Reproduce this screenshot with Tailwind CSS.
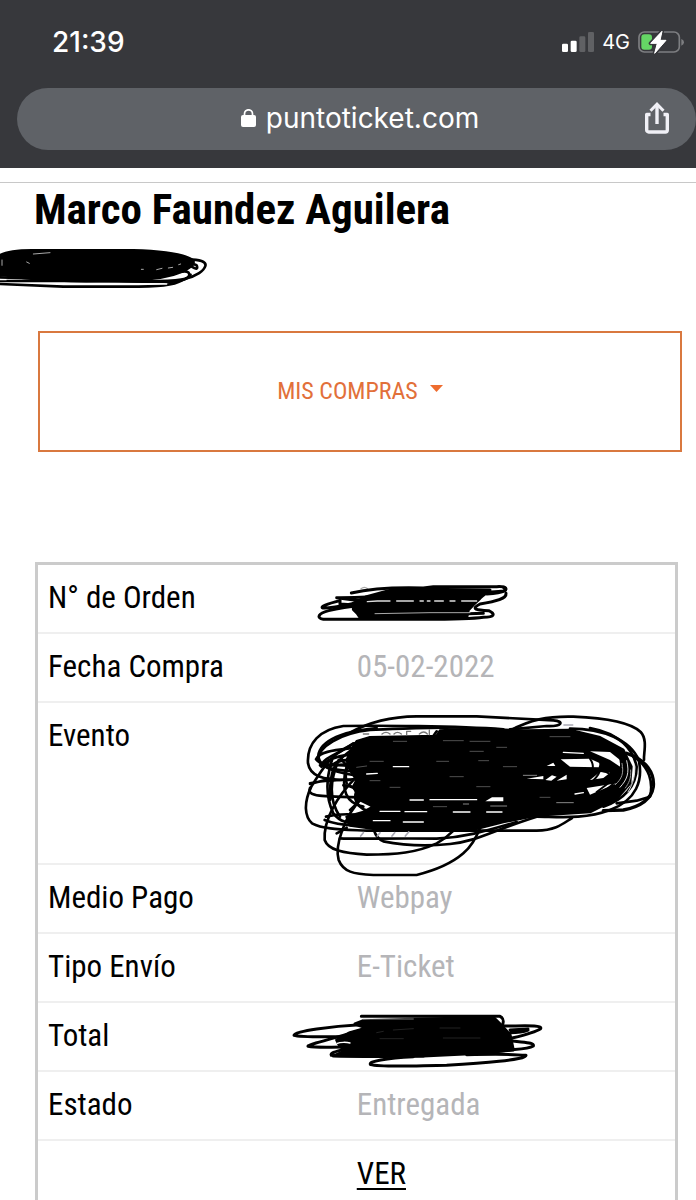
<!DOCTYPE html>
<html lang="es">
<head>
    <meta charset="UTF-8">
    <meta name="viewport" content="width=device-width, initial-scale=1.0">
    <title>Mis compras - puntoticket.com</title>
    <script src="https://cdn.jsdelivr.net/npm/@tailwindcss/browser@4"></script>
</head>

<body class="bg-white text-black overflow-x-hidden font-['Roboto_Condensed','Liberation_Sans_Narrow',Roboto,sans-serif]">
    <!-- Phone status bar and browser address bar -->
    <header class="bg-[#37383c] text-white pb-[18px] font-['Inter',sans-serif]">
        <div class="h-[88px] pb-1 pl-[52px] pr-3 flex items-center justify-between">
            <span class="text-[28px] leading-8 font-medium">21:39</span>
            <div class="flex items-center gap-2">
                <svg class="w-8 h-5" viewBox="0 0 96 60" aria-hidden="true">
                    <rect x="0" y="35" width="18" height="25" rx="4" fill="#fff"/>
                    <rect x="26" y="26" width="18" height="34" rx="4" fill="#fff"/>
                    <rect x="52" y="13" width="18" height="47" rx="4" fill="#606164"/>
                    <rect x="78" y="0" width="18" height="60" rx="4" fill="#606164"/>
                </svg>
                <span class="text-[20px] leading-6">4G</span>
                <svg class="w-[46px] h-6" viewBox="0 0 138 72" aria-hidden="true">
                    <rect x="3" y="6" width="121" height="60" rx="16" fill="none" stroke="#7d7e81" stroke-width="5"/>
                    <path d="M130 27q8 3 8 10t-8 10z" fill="#7d7e81"/>
                    <rect x="10" y="13" width="32" height="46" rx="9" fill="#65d765"/>
                    <path d="M72 4L38 40h20L50 70 84 31H66z" fill="#fff" stroke="#37383c" stroke-width="12" paint-order="stroke" stroke-linejoin="round"/>
                    <path d="M72 4L38 40h20L50 70 84 31H66z" fill="#fff" stroke="#fff" stroke-width="3" stroke-linejoin="round"/>
                </svg>
            </div>
        </div>
        <div class="ml-[17px] h-[62px] pl-[7px] pb-[3px] rounded-full bg-[#5f6267] grid grid-cols-[1fr_auto_1fr] items-center">
            <span></span>
            <div class="flex items-center gap-[10px]">
                <svg class="w-[15px] h-[18px]" viewBox="0 0 15 18" aria-hidden="true">
                    <rect x="0" y="6" width="15" height="12" rx="2" fill="#fff"/>
                    <path d="M3.5 8V4.8a4 4 0 0 1 8 0V8" fill="none" stroke="#fff" stroke-width="1.7"/>
                </svg>
                <a href="#" class="text-[28px] leading-8">puntoticket.com</a>
            </div>
            <button type="button" aria-label="Compartir" class="justify-self-end mr-[26px]">
                <svg class="w-[26px] h-8 block" viewBox="0 0 26 32" fill="none" stroke="#f0f0f6" stroke-width="3.4" stroke-linejoin="round">
                    <path d="M6.5 12.5H2.7V28a2 2 0 0 0 2 2h16.6a2 2 0 0 0 2-2V12.5h-3.8"/>
                    <path d="M13 22V3"/>
                    <path d="M6.5 8.7L13 2.2l6.5 6.5" stroke-width="3" stroke-linejoin="miter"/>
                </svg>
            </button>
        </div>
    </header>

    <main>
        <div class="mt-[14px] border-t border-[#c8c8c8] pt-0.5">
            <h1 class="pl-[34px] text-[43px] leading-[48px] font-bold">Marco Faundez Aguilera</h1>
            <svg class="mt-[14px] w-[210px] h-[43px] block" viewBox="0 201 630 129" fill="none" stroke="#000" stroke-width="8" stroke-linecap="round" stroke-linejoin="round">
                <path d="M0 226C20 214 60 210 110 211H400C480 213 550 222 578 240C590 252 560 272 520 284C470 298 440 300 300 303C220 304 150 302 100 297C50 292 20 285 0 284Z" fill="#000"/>
                <path d="M560 238C600 237 620 246 616 258C612 272 590 288 556 296C530 303 490 302 440 304L0 292"/>
                <path d="M575 260C590 270 594 266 590 256C584 250 560 252 548 256M540 276C575 268 576 290 548 300C520 316 480 320 380 320H190L0 312"/>
                <path d="M0 303H200L510 306C540 304 566 296 572 284" stroke-width="7"/>
                <path d="M470 269L486 265M505 264L518 262M536 254L542 252M424 268H430M80 246L88 250M6 240V256M100 222L150 218" stroke="#fff" stroke-width="2"/>
                <path d="M230 312H500M0 299H18" stroke="#fff" stroke-width="4"/>
            </svg>
        </div>

        <div class="mt-[41px] pl-[38px] pr-[14px]">
            <button type="button" class="w-full h-[121px] pb-0.5 border-2 border-[#d9783f] text-[#e2703a] flex items-center justify-center gap-3 text-[24px] leading-7">
                MIS COMPRAS
                <svg class="w-[13px] h-[7px] mb-1" viewBox="0 0 13 7" fill="#ee6c2f" aria-hidden="true"><path d="M0 0h13L6.5 7z"/></svg>
            </button>
        </div>

        <div class="mt-[110px] pl-[35px] pr-[18px]">
            <table class="w-full table-fixed border-separate border-spacing-0 border-[3px] border-b-0 border-[#cbcbcb] text-[31px] leading-[47px] text-left [&_th]:font-normal [&_th]:align-top [&_th]:pl-[10px] [&_th]:pt-[9px] [&_th]:pb-[11px] [&_td]:align-top [&_td]:pl-[13px] [&_td]:pt-[9px] [&_td]:pb-[11px] [&_td]:text-[#b5b5b8] [&_th]:border-b-2 [&_td]:border-b-2 [&_th]:border-[#efefef] [&_td]:border-[#efefef]">
                <tbody>
                    <tr>
                        <th scope="row" class="w-[48%]">N° de Orden</th>
                        <td class="relative">
                            <svg class="absolute -left-[29px] top-[18px] w-[195px] h-[39px]" viewBox="75 99 585 117" fill="none" stroke="#000" stroke-width="9" stroke-linecap="round" stroke-linejoin="round">
                                <path d="M213 116q10-8 20 0" stroke="#aaa" stroke-width="4"/>
                                <path d="M184 129C240 116 330 112 400 114L430 110H620C654 108 652 120 640 123C600 130 500 126 400 132C300 136 220 144 140 143L210 152"/>
                                <path d="M640 112C655 118 650 128 590 132"/>
                                <path d="M230 140L310 118H400L600 120L575 140L550 164L535 180L530 204L210 202L202 190L190 178L190 160Z" fill="#000"/>
                                <path d="M648 130C650 146 620 154 570 162C540 178 560 180 596 182C618 192 614 202 580 202C540 208 500 208 400 208H100C78 204 84 190 116 182C150 174 160 172 220 166"/>
                                <path d="M150 152C110 162 90 170 98 174C130 176 160 166 240 150M150 162L240 168M150 150V164"/>
                                <path d="M205 192C210 202 300 198 400 196L580 190"/>
                                <path d="M232 155L262 153H300M320 153H370M390 153H400M412 153H420M434 153H460M480 153H495M515 153H560" stroke="#ddd" stroke-width="4"/>
                                <path d="M255 191L420 188H540" stroke="#fff" stroke-width="2"/>
                                <path d="M575 148L598 142" stroke="#fff" stroke-width="3"/>
                            </svg>
                        </td>
                    </tr>
                    <tr>
                        <th scope="row">Fecha Compra</th>
                        <td>05-02-2022</td>
                    </tr>
                    <tr>
                        <th scope="row">Evento</th>
                        <td class="relative h-[162px]">
                            <svg class="absolute -left-[42px] top-[10px] w-[354px] h-[165px]" viewBox="36 39 1062 495" fill="none" stroke="#000" stroke-width="8" stroke-linecap="round" stroke-linejoin="round">
                                <!-- solid core -->
                                <path d="M190 140L200 124L240 112L440 108L450 92L560 86L700 92L840 90L930 112L1000 150L1024 200L1020 250L980 296L900 336L740 346L640 366L560 386H250L180 376L170 350L220 336L250 320L210 300L190 260L200 240L180 210L170 180Z" fill="#000"/>
                                <!-- outer loops -->
                                <path d="M180 98C230 70 300 50 380 49H560L790 61C825 64 816 80 770 78L660 88"/>
                                <path d="M660 92C720 60 770 48 850 50C950 54 1020 66 1052 96C1074 120 1060 160 1062 180"/>
                                <path d="M640 88C500 78 260 76 160 78C90 88 50 130 54 190C60 226 90 240 180 240"/>
                                <path d="M520 82C380 84 290 86 240 90C150 100 84 140 84 180C100 210 160 214 220 214"/>
                                <path d="M260 84C190 90 100 110 86 160C80 196 120 216 200 226"/>
                                <path d="M220 140C150 150 90 150 78 178C90 196 140 200 190 190M240 160C160 160 110 176 94 200"/>
                                <path d="M220 120C130 150 100 200 64 260C40 310 44 350 66 370C100 388 150 388 230 392H740C800 390 820 370 846 354"/>
                                <path d="M60 250C100 240 160 240 230 236M60 264C50 290 90 290 240 292M60 252L120 236"/>
                                <path d="M126 180C110 230 106 290 130 340C150 366 170 370 230 376"/>
                                <path d="M146 180C120 240 116 300 150 350M184 150C130 190 118 210 120 300M170 200C150 270 170 310 220 320"/>
                                <path d="M210 260C180 290 200 330 250 336M160 256C210 256 220 300 180 330"/>
                                <path d="M200 230C140 290 100 360 104 420C114 450 160 460 230 464C320 464 380 458 440 430C470 414 480 402 492 390"/>
                                <path d="M220 290C160 350 134 440 146 480C160 516 190 522 250 525H380C440 510 490 486 520 460C548 436 560 410 570 384L576 330"/>
                                <path d="M250 340C246 380 250 410 280 424C340 436 420 438 480 432C560 424 600 394 740 350"/>
                                <path d="M150 415C200 418 300 414 440 416C520 412 580 396 680 366"/>
                                <path d="M140 400L170 384M104 360C150 380 240 380 300 370M108 350C150 340 190 340 240 350M190 130C150 160 110 170 100 186M230 180C170 176 140 180 120 200M240 210C190 200 150 190 90 196M220 226C180 210 160 190 150 170M190 160C180 190 160 210 170 250"/>
                                <path d="M440 94L430 108M840 86C940 86 1020 120 1046 180C1060 240 1040 300 960 330C880 360 800 350 740 350"/>
                                <path d="M900 84C990 100 1030 150 1040 200C1040 260 1000 300 940 320"/>
                                <path d="M1010 160C1070 180 1094 220 1090 260C1084 300 1050 320 1000 330L940 332" stroke-width="10"/>
                                <path d="M1030 170C1080 200 1090 250 1080 290L1040 302L980 310"/>
                                <!-- traces of the covered text -->
                                <g stroke="#777" stroke-width="4">
                                    <path d="M220 102h16M276 102q12-10 24 0M312 102q10-10 22 0M350 104v-10h12M388 102q14-12 24 0M418 104V90"/>
                                </g>
                                <path d="M822 75h26M212 408l8-10M262 408l8-10M306 408l8-10M346 408l10-12" stroke="#a9a9b4" stroke-width="5"/>
                                <!-- gaps between strokes -->
                                <path d="M812 178L900 176L930 190L926 202L840 200Z" fill="#fff" stroke="none"/>
                                <path d="M900 154L960 156L990 180L996 204L960 180Z" fill="#fff" stroke="none"/>
                                <path d="M930 216L960 218L940 234L900 240ZM890 264L980 250L900 284Z" fill="#fff" stroke="none"/>
                                <path d="M770 198L790 188L796 198ZM710 236L760 228V238ZM766 240L786 226L800 230L784 242ZM800 242L830 224V238Z" fill="#fff" stroke="none"/>
                                <path d="M586 304L606 292H640V304Z" fill="#fff" stroke="none"/>
                                <path d="M420 299H560M360 300H400M270 334H330M345 335H410M490 336H540M590 336H636M250 362H300M340 366H400M310 200H356M230 222L262 220M820 157L880 160M855 282L880 278" stroke="#fff" stroke-width="4"/>
                                <path d="M700 226H740M800 308H850M520 312H536M602 318H650" stroke="#ccc" stroke-width="2"/>
                                <path d="M240 184H280M200 202L230 198M240 242H270M440 184H476M566 182H596M640 200H680M460 122H520M540 124H600M310 124H350M750 292H780M540 154H580M300 262H330M480 230H520M430 320H470M780 110H840M620 142H650M560 260H600" stroke="#777" stroke-width="2"/>
                                <!-- strokes over the gaps -->
                                <path d="M900 176C916 200 910 216 880 230M926 180C940 200 930 226 900 250M860 212C900 206 940 210 956 220M985 160C1004 200 990 250 930 280M920 276L960 246" stroke-width="6"/>
                                <path d="M1010 182C1020 220 1010 240 990 262M1034 196C1036 226 1030 250 1014 276" stroke="#ddd" stroke-width="3"/>
                                <path d="M996 190C1002 220 996 236 976 254M1022 210C1024 236 1016 250 1006 264" stroke="#999" stroke-width="3"/>
                            </svg>
                        </td>
                    </tr>
                    <tr>
                        <th scope="row">Medio Pago</th>
                        <td>Webpay</td>
                    </tr>
                    <tr>
                        <th scope="row">Tipo Envío</th>
                        <td>E-Ticket</td>
                    </tr>
                    <tr>
                        <th scope="row">Total</th>
                        <td class="relative">
                            <svg class="absolute -left-[53px] top-[9px] w-[254px] h-[57px]" viewBox="33 36 762 171" fill="none" stroke="#000" stroke-width="9" stroke-linecap="round" stroke-linejoin="round">
                                <path d="M244 49H660C674 56 670 66 668 74"/>
                                <path d="M225 72L250 62L400 58L640 52L668 80L690 104L700 150L600 160L430 168H160L200 150L180 140L170 120L210 98L260 84Z" fill="#000"/>
                                <path d="M240 74C160 78 40 94 42 106C60 112 120 110 200 110"/>
                                <path d="M260 86C180 110 80 134 84 139C110 144 160 142 220 140"/>
                                <path d="M200 146C160 156 150 160 154 166C180 170 300 170 430 168"/>
                                <path d="M670 78C730 78 788 74 782 86C760 100 720 108 680 118"/>
                                <path d="M690 90L744 87M690 98C720 98 730 96 744 90"/>
                                <path d="M690 122C730 128 764 126 760 138C740 150 700 146 640 156"/>
                                <path d="M400 170C320 174 262 184 272 194C300 202 380 198 500 196C600 190 740 180 738 166C700 162 640 162 560 164"/>
                                <path d="M172 130C180 126 200 126 210 129" stroke="#fff" stroke-width="4"/>
                                <path d="M250 57H400" stroke="#bbb" stroke-width="2"/>
                                <path d="M290 98L310 94M340 90L400 86M480 84H540M490 114H600M300 116H370" stroke="#333" stroke-width="2"/>
                            </svg>
                        </td>
                    </tr>
                    <tr>
                        <th scope="row">Estado</th>
                        <td>Entregada</td>
                    </tr>
                    <tr>
                        <th></th>
                        <td><a href="#" class="text-black underline decoration-2 underline-offset-4">VER</a></td>
                    </tr>
                </tbody>
            </table>
        </div>
    </main>
</body>
</html>
